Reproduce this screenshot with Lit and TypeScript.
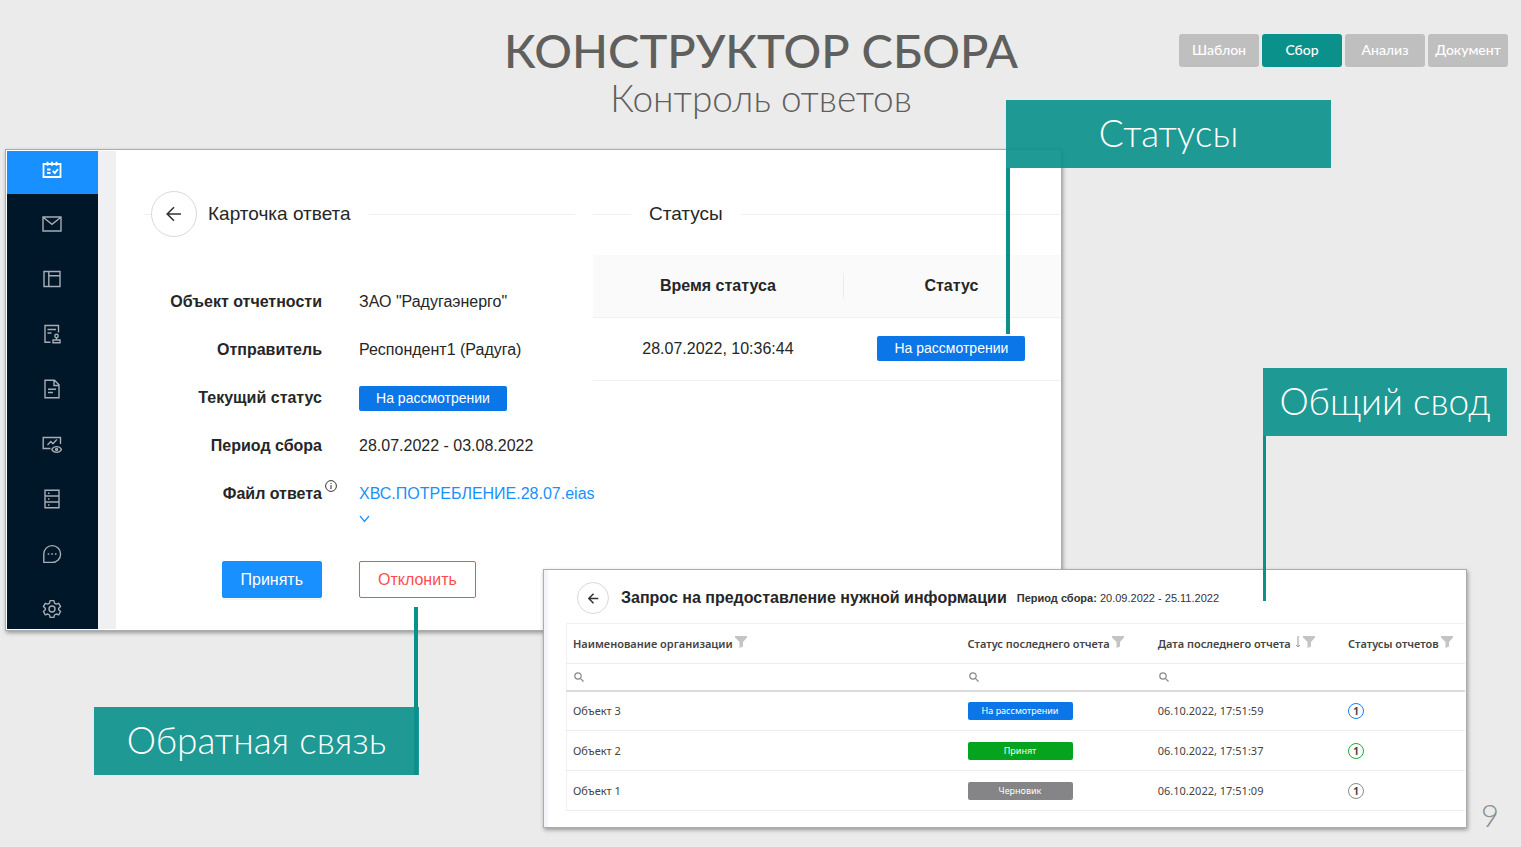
import { LitElement, html, css, svg } from "lit";
import { customElement } from "lit/decorators.js";
import { classMap } from "lit/directives/class-map.js";

const NAV = [
  { label: "Сбор", icon: svg`<path d="M1.5 4h17v13h-17zM5.5 1.8v4M10 1.8v4M14.500 1.800v4M5 9.500h3.500M5 13h3.500M10.800 10.800l2 2.200 3.200-4" stroke-width="1.800"/>` },
  { label: "Почта", icon: svg`<path d="M1 3h18v14H1zM1.500 3.500L10 10.300l8.500-6.800"/>` },
  { label: "Шаблоны", icon: svg`<path d="M2 2.500h16v15H2zM6.800 2.500v15M6.800 6.800H18"/>` },
  { label: "Согласование", icon: svg`<path d="M8.500 18.300H3V1.500h13.500v7M5.500 5.500h8.500M5.500 9h4M11 16h7v2.800h-7zM14.500 16v-2.300"/><circle cx="14.500" cy="12" r="1.700"/>` },
  { label: "Документы", icon: svg`<path d="M3 1.200h9.500L17 5.800v13H3zM12 1.500v5h5M6 10.200h8M6 13.500h5"/>` },
  { label: "Мониторинг", icon: svg`<path d="M8.500 14.500H1.200v-11h17.300v6.500M5.500 11l3.300-3.500 2.200 2.300 3.800-4.300M9.800 15.500c2-3.800 7.700-3.800 9.700 0c-2 3.800-7.700 3.800-9.700 0z"/><circle cx="14.600" cy="15.500" r="1"/>` },
  { label: "Хранилище", icon: svg`<path d="M3 1.200h14v17.600H3zM3 7h14M3 13h14M6 4.200h1.500M6 10h1.500M6 16h1.500"/>` },
  { label: "Сообщения", icon: svg`<path d="M1.800 18.300v-8.200a8.400 8.400 0 1 1 8.400 8.300zM5.700 10h1.600M9.300 10h1.600M12.900 10h1.600"/>` },
  { label: "Настройки", icon: svg`<path d="M8.100 1.600h3.800l.6 2.500 1.700 1 2.500-.8 1.900 3.300-1.900 1.700v1.500l1.900 1.700-1.900 3.300-2.500-.8-1.700 1-.6 2.400H8.100L7.500 16l-1.700-1-2.500.8-1.900-3.300 1.900-1.700V9.300L1.400 7.600l1.900-3.300 2.500.8 1.700-1z" stroke-linejoin="round"/><circle cx="10" cy="10" r="3"/>` },
];

const STEPS = ["Шаблон", "Сбор", "Анализ", "Документ"];

const REPORTS = [
  { name: "Объект 3", status: "На рассмотрении", kind: "review", date: "06.10.2022, 17:51:59" },
  { name: "Объект 2", status: "Принят", kind: "accepted", date: "06.10.2022, 17:51:37" },
  { name: "Объект 1", status: "Черновик", kind: "draft", date: "06.10.2022, 17:51:09" },
];

const arrow = html`<svg class="arrow" viewBox="0 0 16 16" aria-hidden="true"><path d="M15 8H1.500M8 1.200L1.200 8 8 14.800"/></svg>`;
const funnel = html`<button class="icon-btn" aria-label="Фильтр"><svg class="funnel" viewBox="0 0 12 12" aria-hidden="true"><path d="M0 0h12v1.500L8 6v4.500L4.500 12V6L0 1.500z"/></svg></button>`;
const search = (label: string) => html`<label class="search"><svg viewBox="0 0 10 10" aria-hidden="true"><circle cx="4" cy="4" r="3.200"/><path d="M6.300 6.300L9.500 9.500"/></svg><input type="text" aria-label=${label} /></label>`;

@customElement("app-root")
export class AppRoot extends LitElement {
  static styles = css`
    :host {
      display: block;
      position: relative;
      min-height: 100vh;
      box-sizing: border-box;
      background: #ebebeb;
      overflow: hidden;
      font-family: "Liberation Sans", Arial, sans-serif;
      color: #262626;
    }
    * { box-sizing: border-box; }
    button, input { font: inherit; color: inherit; margin: 0; }
    button { cursor: pointer; }
    h1, h2, h3, p, dl, dd { margin: 0; font-weight: 400; }
    table { border-collapse: collapse; width: 100%; table-layout: fixed; }
    .head {
      display: grid;
      grid-template-columns: 1fr auto 1fr;
      padding: 22px 13px 0 14px;
      height: 149px;
      font-family: Lato, sans-serif;
      color: #5f5f5d;
      text-align: center;
    }
    .titles { grid-column: 2; }
    .title { font-size: 47px; line-height: 56px; font-weight: 500; }
    .subtitle { font-size: 37px; line-height: 40px; font-weight: 300; }
    .steps { display: flex; gap: 3px; justify-content: flex-end; padding-top: 12px; }
    .step {
      width: 80px;
      height: 33px;
      padding: 0 0 2px;
      border: 0;
      border-radius: 3px;
      background: #bfbfbf;
      color: #fff;
      font-size: 14px;
      font-weight: 500;
    }
    .step.on { background: #0b918b; }
    .window { background: #fff; border: 1px solid #a9adad; box-shadow: 1px 2px 4px #00000059; }
    .card { display: flex; margin: 0 459px 0 5px; padding: 1px; }
    .nav { width: 91px; background: #001629; display: flex; flex-direction: column; }
    .nav-item { display: grid; place-items: center; height: 40px; padding-right: 2px; color: #a6adb4; }
    .nav-item svg { width: 20px; height: 20px; fill: none; stroke: currentColor; stroke-width: 1.400; }
    .nav-item.on { height: 43px; padding-bottom: 6px; background: #1890ff; color: #fff; }
    .nav-rest { flex: 1; display: flex; flex-direction: column; justify-content: space-between; padding-top: 10px; }
    .content {
      flex: 1;
      min-width: 0;
      border-left: 18px solid #f0f0f3;
      padding: 40px 0 31px 28px;
      display: grid;
      grid-template-columns: minmax(0, 431fr) minmax(0, 467fr);
      column-gap: 18px;
    }
    .divider { display: flex; align-items: center; height: 46px; font-size: 19px; white-space: nowrap; }
    .divider::before, .divider::after { content: ""; height: 1px; background: #f0f0f0; }
    .divider::before { width: 7px; }
    .divider::after { flex: 1; margin-left: 18px; }
    .divider.wide::before { width: 38px; margin-right: 18px; }
    .back {
      display: grid;
      place-items: center;
      width: 46px;
      height: 46px;
      padding: 0;
      border: 1px solid #d9d9d9;
      border-radius: 50%;
      background: #fff;
      margin-right: 11px;
    }
    .arrow { width: 16px; height: 16px; fill: none; stroke: #333; stroke-width: 1.600; }
    .back.small { width: 32px; height: 32px; margin: 0; }
    .back.small .arrow { width: 11px; height: 11px; stroke-width: 2.200; }
    .fields { display: grid; grid-template-columns: 178px 1fr; column-gap: 37px; padding-top: 41px; font-size: 16px; }
    .fields dt, .fields dd { height: 48px; line-height: 48px; white-space: nowrap; }
    .fields dt { position: relative; text-align: right; font-weight: 700; }
    .info { position: absolute; left: 100%; top: 10px; margin-left: 3px; width: 12px; height: 12px; fill: none; stroke: #333; }
    .fields a { color: #1890ff; text-decoration: none; }
    .more { display: block; border: 0; background: none; padding: 0; height: 12px; margin-top: -5px; }
    .more svg { display: block; width: 12px; height: 8px; fill: none; stroke: #1890ff; stroke-width: 1.200; }
    .tag {
      display: inline-grid;
      place-items: center;
      width: 148px;
      height: 25px;
      border-radius: 2px;
      background: #0b76e8;
      color: #fff;
      font-size: 14px;
      line-height: 25px;
      vertical-align: middle;
    }
    .actions { display: grid; grid-template-columns: 178px 1fr; column-gap: 37px; padding-top: 43px; }
    .btn { height: 37px; padding: 0 18px; border-radius: 2px; font-size: 16px; border: 1px solid #ff4d4f; background: #fff; color: #ff4d4f; justify-self: start; }
    .btn.primary { justify-self: end; background: #1890ff; border-color: #1890ff; color: #fff; box-shadow: 0 2px 0 #0000000b; }
    .log { margin-top: 18px; font-size: 16px; text-align: center; }
    .log th { position: relative; height: 62px; background: #fafafa; border-bottom: 1px solid #f0f0f0; padding: 0; }
    .log th + th::before { content: ""; position: absolute; left: 0; top: 18px; width: 1px; height: 26px; background: #ececec; }
    .log td { height: 63px; border-bottom: 1px solid #f0f0f0; padding: 0; }
    .log tr > :last-child { padding-right: 0; }
    .report {
      position: absolute;
      left: 543px;
      right: 54px;
      top: 569px;
      padding: 12px 1px 16px 18px;
      border-left-color: #a9adad;
      box-shadow: 1px 2px 4px #00000059, inset 4px 0 0 #f3f5f8;
      font-family: "Noto Sans", "Open Sans", sans-serif;
    }
    .report-head { display: flex; align-items: center; padding-left: 15px; height: 32px; margin-bottom: 9px; font-family: "Liberation Sans", Arial, sans-serif; white-space: nowrap; }
    .report-title { font-size: 16px; font-weight: 700; margin: 0 10px 0 12px; }
    .period { font-size: 11px; color: #333; }
    .grid { margin-left: 4px; width: calc(100% - 4px); border-top: 1px solid #f0f0f0; border-left: 1px solid #f0f0f0; font-size: 11px; color: #444; text-align: left; white-space: nowrap; }
    .grid th, .grid td { padding: 0 0 0 6px; border-bottom: 1px solid #ececec; height: 40px; }
    .grid th { font-weight: 600; }
    .grid tr.filters td { height: 27px; border-bottom: 2px solid #dcdcdc; }
    .grid col.c1 { width: 395px; }
    .grid col.c4 { width: 123px; }
    .report .tag { width: 105px; height: 18px; font-size: 9px; line-height: 18px; }
    .tag.accepted { background: #04a41e; }
    .tag.draft { background: #858587; }
    .icon-btn { border: 0; background: none; padding: 0; margin-left: 2px; }
    .funnel { display: block; width: 12px; height: 12px; fill: #c4c4c4; }
    .sort { display: inline-block; width: 6px; height: 12px; margin-left: 4px; fill: none; stroke: #999; }
    .search { display: flex; align-items: center; gap: 4px; padding-left: 1px; }
    .search svg { flex: none; width: 10px; height: 10px; fill: none; stroke: #888; stroke-width: 1.200; }
    .search input { flex: 1; min-width: 0; border: 0; outline: 0; background: none; padding: 0; height: 16px; }
    .count { display: grid; place-items: center; width: 16px; height: 16px; border-radius: 50%; border: 1px solid #1880f0; font-weight: 700; font-size: 10px; line-height: 14px; }
    .count.accepted { border-color: #1fae3a; }
    .count.draft { border-color: #8c8c8c; }
    .callout {
      position: absolute;
      display: grid;
      place-items: center;
      height: 68px;
      padding-bottom: 3px;
      background: #0b918bea;
      color: #fff;
      font-family: Lato, sans-serif;
      font-size: 37px;
      font-weight: 300;
      white-space: nowrap;
    }
    .callout::after { content: ""; position: absolute; width: 4px; background: #0b918b; }
    .statuses { right: 190px; top: 100px; width: 325px; }
    .statuses::after { left: 0; top: 68px; height: 166px; }
    .summary { right: 14px; top: 368px; width: 244px; }
    .summary::after { left: 0; top: 68px; width: 3px; height: 165px; }
    .feedback { left: 94px; top: 707px; width: 325px; }
    .feedback::after { right: 1px; bottom: 0; height: 168px; }
    .page { position: absolute; right: 22px; bottom: 12px; font-family: Lato, sans-serif; font-weight: 300; font-size: 31px; line-height: 40px; color: #8f8f8f; }
  `;

  private navItem(item: (typeof NAV)[number], on = false) {
    return html`<a class=${classMap({ "nav-item": true, on })} href="#" aria-label=${item.label}>
      <svg viewBox="0 0 20 20" aria-hidden="true">${item.icon}</svg></a>`;
  }

  render() {
    return html`
      <header class="head">
        <div class="titles">
          <h1 class="title">КОНСТРУКТОР СБОРА</h1>
          <p class="subtitle">Контроль ответов</p>
        </div>
        <nav class="steps">
          ${STEPS.map((s) => html`<button class=${classMap({ step: true, on: s === "Сбор" })}>${s}</button>`)}
        </nav>
      </header>

      <main class="window card">
        <nav class="nav">
          ${this.navItem(NAV[0], true)}
          <div class="nav-rest">${NAV.slice(1).map((n) => this.navItem(n))}</div>
        </nav>
        <div class="content">
          <section>
            <h2 class="divider"><button class="back" aria-label="Назад">${arrow}</button>Карточка ответа</h2>
            <dl class="fields">
              <dt>Объект отчетности</dt><dd>ЗАО "Радугаэнерго"</dd>
              <dt>Отправитель</dt><dd>Респондент1 (Радуга)</dd>
              <dt>Текущий статус</dt><dd><span class="tag">На рассмотрении</span></dd>
              <dt>Период сбора</dt><dd>28.07.2022 - 03.08.2022</dd>
              <dt>Файл ответа<svg class="info" viewBox="0 0 12 12" aria-hidden="true"><circle cx="6" cy="6" r="5.400"/><path d="M6 5v4M6 3v1"/></svg></dt>
              <dd><a href="#">ХВС.ПОТРЕБЛЕНИЕ.28.07.eias</a>
                <button class="more" aria-label="Показать ещё"><svg viewBox="0 0 12 8" aria-hidden="true"><path d="M1 1l4.500 5.500L10 1"/></svg></button>
              </dd>
            </dl>
            <div class="actions">
              <button class="btn primary">Принять</button>
              <button class="btn">Отклонить</button>
            </div>
          </section>
          <section>
            <h2 class="divider wide">Статусы</h2>
            <table class="log">
              <colgroup><col style="width:53.500%" /><col /></colgroup>
              <thead><tr><th>Время статуса</th><th>Статус</th></tr></thead>
              <tbody><tr><td>28.07.2022, 10:36:44</td><td><span class="tag">На рассмотрении</span></td></tr></tbody>
            </table>
          </section>
        </div>
      </main>

      <section class="window report">
        <div class="report-head">
          <button class="back small" aria-label="Назад">${arrow}</button>
          <h3 class="report-title">Запрос на предоставление нужной информации</h3>
          <span class="period"><b>Период сбора:</b> 20.09.2022 - 25.11.2022</span>
        </div>
        <table class="grid">
          <colgroup><col class="c1" /><col /><col /><col class="c4" /></colgroup>
          <thead>
            <tr>
              <th>Наименование организации${funnel}</th>
              <th>Статус последнего отчета${funnel}</th>
              <th>Дата последнего отчета<svg class="sort" viewBox="0 0 6 12" aria-hidden="true"><path d="M3 0v11M1 9l2 2 2-2"/></svg>${funnel}</th>
              <th>Статусы отчетов${funnel}</th>
            </tr>
          </thead>
          <tbody>
            <tr class="filters">
              <td>${search("Поиск по организации")}</td>
              <td>${search("Поиск по статусу")}</td>
              <td>${search("Поиск по дате")}</td>
              <td></td>
            </tr>
            ${REPORTS.map((r) => html`<tr>
              <td>${r.name}</td>
              <td><span class="tag ${r.kind}">${r.status}</span></td>
              <td>${r.date}</td>
              <td><span class="count ${r.kind}">1</span></td>
            </tr>`)}
          </tbody>
        </table>
      </section>

      <div class="callout statuses">Статусы</div>
      <div class="callout summary">Общий свод</div>
      <div class="callout feedback">Обратная связь</div>
      <span class="page">9</span>
    `;
  }
}
